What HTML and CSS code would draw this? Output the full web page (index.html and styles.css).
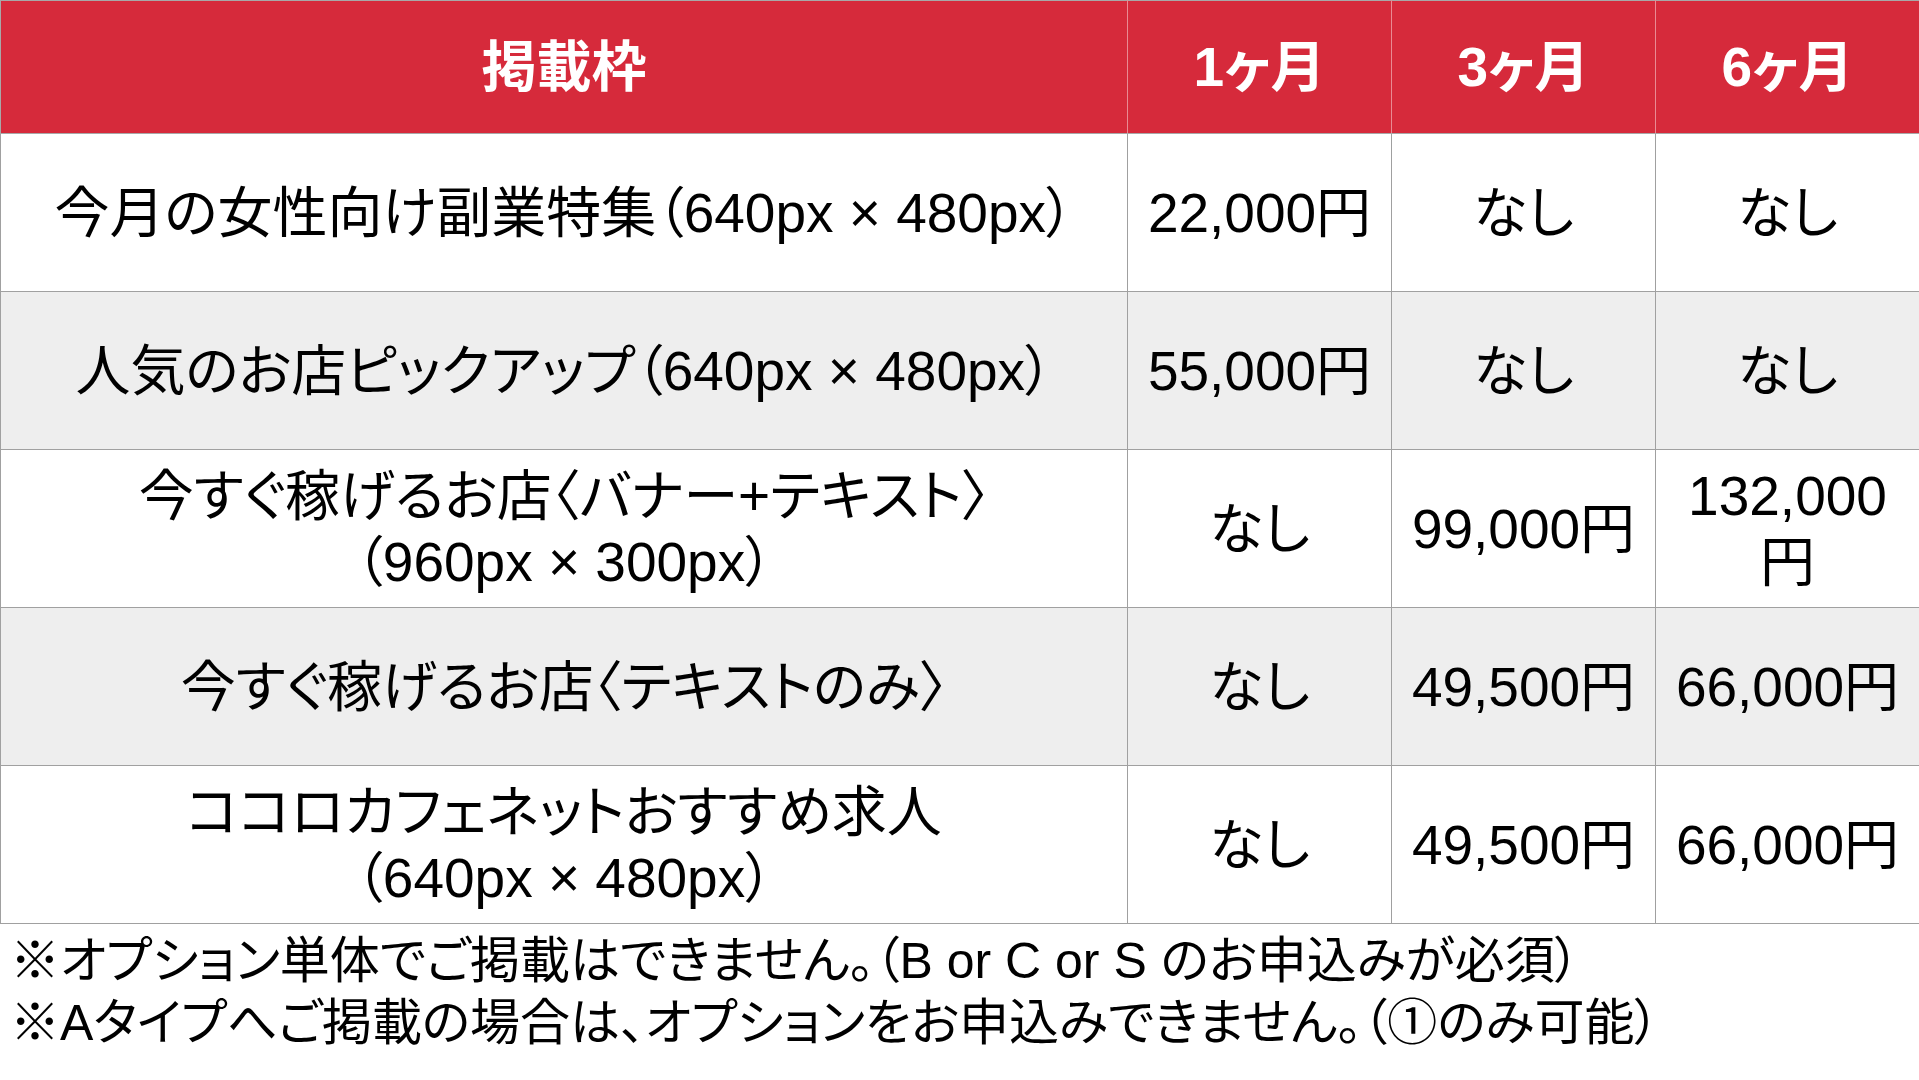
FILE: index.html
```html
<!DOCTYPE html>
<html lang="ja">
<head>
<meta charset="utf-8">
<title>掲載枠 料金表</title>
<link rel="stylesheet" href="styles.css">
</head>
<body>
<table class="price-table">
  <colgroup>
    <col class="col-name">
    <col class="col-term">
    <col class="col-term">
    <col class="col-term">
  </colgroup>
  <thead>
    <tr>
      <th>掲載枠</th>
      <th>1ヶ月</th>
      <th>3ヶ月</th>
      <th>6ヶ月</th>
    </tr>
  </thead>
  <tbody>
    <tr>
      <td>今月の女性向け副業特集（640px × 480px）</td>
      <td>22,000円</td>
      <td>なし</td>
      <td>なし</td>
    </tr>
    <tr class="alt">
      <td>人気のお店ピックアップ（640px × 480px）</td>
      <td>55,000円</td>
      <td>なし</td>
      <td>なし</td>
    </tr>
    <tr>
      <td>今すぐ稼げるお店〈バナー+テキスト〉<br>（960px × 300px）</td>
      <td>なし</td>
      <td>99,000円</td>
      <td>132,000<br>円</td>
    </tr>
    <tr class="alt">
      <td>今すぐ稼げるお店〈テキストのみ〉</td>
      <td>なし</td>
      <td>49,500円</td>
      <td>66,000円</td>
    </tr>
    <tr>
      <td>ココロカフェネットおすすめ求人<br>（640px × 480px）</td>
      <td>なし</td>
      <td>49,500円</td>
      <td>66,000円</td>
    </tr>
  </tbody>
</table>
<div class="notes">
  <p>※オプション単体でご掲載はできません。（B or C or S のお申込みが必須）</p>
  <p>※Aタイプへご掲載の場合は、オプションをお申込みできません。（①のみ可能）</p>
</div>
</body>
</html>
```

FILE: styles.css
```css
html, body {
  margin: 0;
  padding: 0;
  background: #ffffff;
}

body {
  font-family: "Liberation Sans", "Noto Sans CJK JP", sans-serif;
  color: #000000;
  width: 1919px;
  font-feature-settings: "palt";
}

.price-table {
  width: 1919px;
  border-collapse: collapse;
  table-layout: fixed;
  font-size: 55px;
  line-height: 66px;
}

.col-name {
  width: 1127px;
}

.col-term {
  width: 264px;
}

.price-table th,
.price-table td {
  padding: 0 4px;
  text-align: center;
  vertical-align: middle;
  white-space: nowrap;
}

.price-table th {
  height: 132px;
  background: #d62a3b;
  color: #ffffff;
  font-weight: bold;
  border-top: 1px solid #a8a8a8;
  border-left: 1px solid #e98a93;
  border-right: 1px solid #e98a93;
  border-bottom: 1px solid #a8a8a8;
}

.price-table th:first-child {
  border-left: 1px solid #a8a8a8;
}

.price-table th:last-child {
  border-right: 1px solid #a8a8a8;
}

.price-table td {
  height: 157px;
  background: #ffffff;
  font-weight: normal;
  border: 1px solid #a0a0a0;
}

.price-table tr.alt td {
  background: #eeeeee;
}

.notes {
  padding: 6px 0 0 10px;
  font-size: 50px;
  line-height: 62px;
}

.notes p {
  margin: 0;
  white-space: nowrap;
}
```
